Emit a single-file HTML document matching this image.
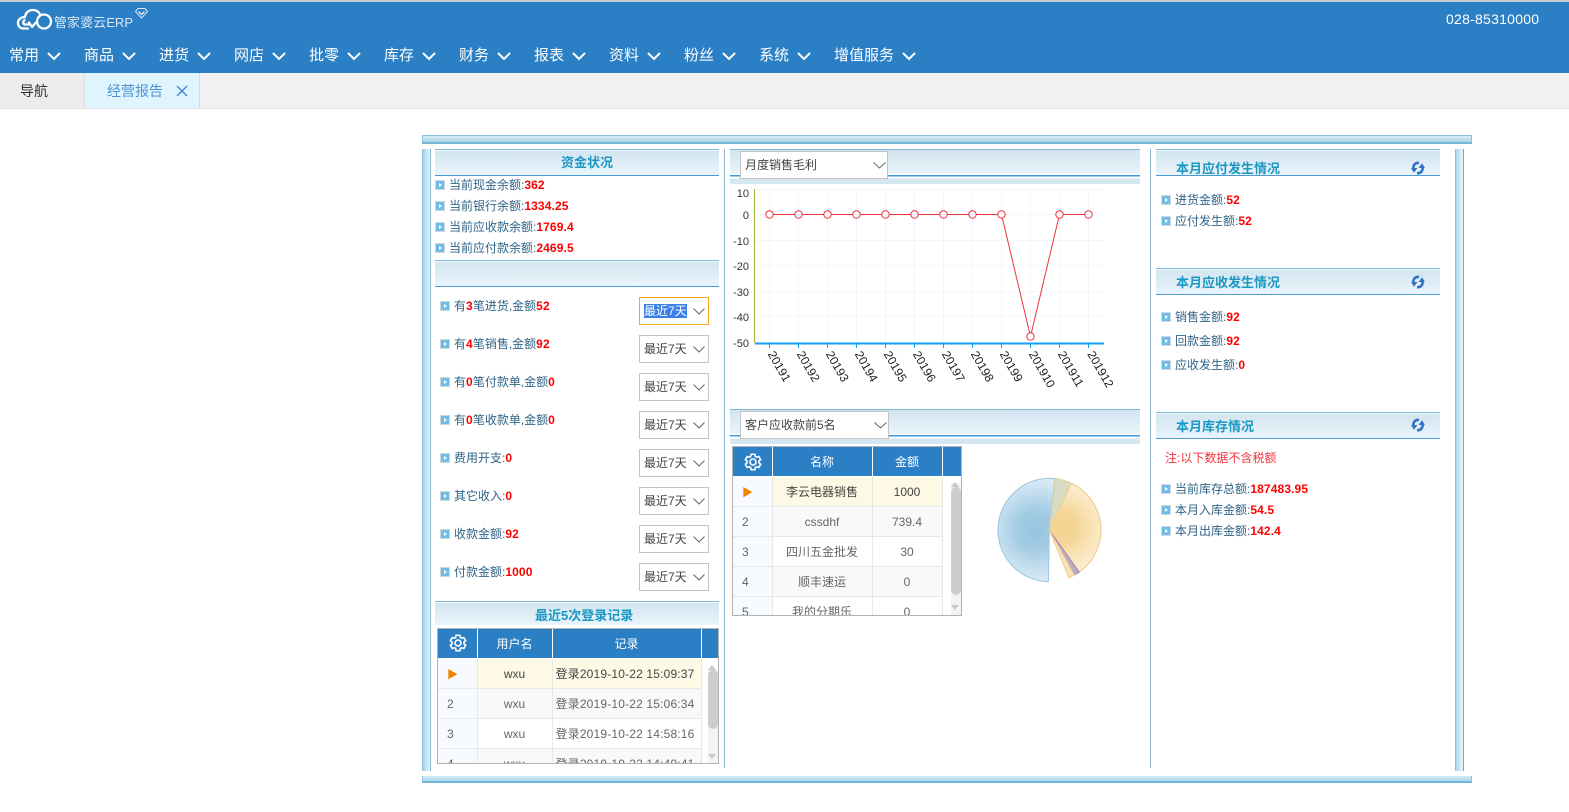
<!DOCTYPE html>
<html lang="zh">
<head>
<meta charset="utf-8">
<title>经营报告</title>
<style>
html,body{margin:0;padding:0;background:#fff;width:1569px;height:812px;overflow:hidden}
body{position:relative;font:12px "Liberation Sans","Noto Sans CJK SC",sans-serif;color:#2f6487}
.a{position:absolute;white-space:nowrap}
svg{position:absolute;overflow:visible}
.nav{top:47px;height:18px;line-height:18px;font-size:15px;color:#fff}
.chev{position:absolute;left:38px;top:1px}
.hd{position:absolute;box-sizing:border-box;border-top:1px solid #7fb9d8;border-bottom:1px solid #4a9ad4;background:linear-gradient(#d2e4ef,#e9f5fb)}
.hd:before{content:"";position:absolute;left:0;right:0;top:0;height:1px;background:#f2f9fc}
.ti{position:absolute;font-size:13px;font-weight:bold;color:#1d97c4;line-height:18px;white-space:nowrap}
.tc{text-align:center}
.r{position:absolute;white-space:nowrap;line-height:16px;height:16px;color:#2f6487}
.r b{color:#f00;font-weight:bold;letter-spacing:.12px}
.r i{position:absolute;left:-14px;top:3px;width:8px;height:8px;background:#6fbce6;border:1px solid #cfd8de}
.r i:after{content:"";position:absolute;left:3px;top:1.5px;border-left:3px solid #fff;border-top:2.5px solid transparent;border-bottom:2.5px solid transparent}
.sel{position:absolute;box-sizing:border-box;background:#fff;border:1px solid #c4c4c4;height:28px;line-height:26px;padding-left:4px;color:#444;font-size:12px;white-space:nowrap}
.sel svg{top:10px}
.w{width:70px}
.w svg{left:53px}
.sel u{text-decoration:none;background:#3b80e6;color:#fff}
.tb{position:absolute;box-sizing:border-box;border:1px solid #b2b2b2;overflow:hidden;background:#fff}
table{border-collapse:collapse;table-layout:fixed;position:absolute;left:0;top:0}
th{background:#2a7fc5;color:#fff;font-weight:normal;height:29px;padding:0;border-right:1px solid #fff;font-size:12px;border-bottom:1px solid #fff}
td{height:29px;padding:0;border-right:1px solid #e8e8e8;border-bottom:1px solid #e8e8e8;text-align:center;color:#666;font-size:12px;white-space:nowrap;overflow:hidden}
td:first-child{background:#f7fbff;text-align:left;padding-left:9px;box-sizing:border-box}
td.l{text-align:left;padding-left:3px;letter-spacing:.17px;box-sizing:border-box}
tr.s td{background:#fef9e5;color:#444}
tr.s td:first-child{background:#f7fbff;color:#f08300;font-size:11px}
tr.e td{background:#f9f9f9}
tr.e td:first-child{background:#f7fbff}
.tr{position:absolute;background:#f3f3f3}
.th{position:absolute;background:#cdcdcd;border-radius:5px}
.ar{position:absolute;width:0;height:0;border-left:4.5px solid transparent;border-right:4.5px solid transparent}
</style>
</head>
<body>
<!-- top bar -->
<div class="a" style="left:0;top:0;width:1569px;height:2px;background:#c8ccd0"></div>
<div class="a" style="left:0;top:1.500px;width:1569px;height:71.500px;background:#2a7fc5"></div>
<svg style="left:0;top:0" width="150" height="36" fill="none" stroke="#fff" stroke-width="2.300" stroke-linecap="round" stroke-linejoin="round">
<path d="M28 28.500H23.500C20 28.500 18 26 18 23C18 19.500 21 17 25 17C25.500 12.500 29 10 33 10C36.500 10 39 12 40.500 15"/>
<path d="M24.500 20C22.500 22 23 25 26 24.500H29"/>
<path d="M29 22.500L32 27L35.500 23"/>
<circle cx="44" cy="21.500" r="7"/>
</svg>
<div class="a" style="left:54px;top:14px;font-size:13px;line-height:18px;color:#d8e8f5;letter-spacing:.05px">管家婆云ERP</div>
<svg style="left:135px;top:8px" width="13" height="11" fill="none" stroke="#d8e8f5" stroke-width="1"><path d="M3 .5H10L12.500 3.500L6.500 10L.5 3.500Z"/><path d="M3.500 3.500L6.500 6.500L9.500 3.500" stroke-width="1.500"/></svg>
<div class="a" style="left:1446px;top:11px;font-size:14px;line-height:16px;letter-spacing:.25px;color:#fff">028-85310000</div>

<div class="a nav" style="left:9px">常用<svg class="chev" width="14" height="16" fill="none" stroke="#fff" stroke-width="2"><path d="M1 5L7 11L13 5"/></svg></div>
<div class="a nav" style="left:84px">商品<svg class="chev" width="14" height="16" fill="none" stroke="#fff" stroke-width="2"><path d="M1 5L7 11L13 5"/></svg></div>
<div class="a nav" style="left:159px">进货<svg class="chev" width="14" height="16" fill="none" stroke="#fff" stroke-width="2"><path d="M1 5L7 11L13 5"/></svg></div>
<div class="a nav" style="left:234px">网店<svg class="chev" width="14" height="16" fill="none" stroke="#fff" stroke-width="2"><path d="M1 5L7 11L13 5"/></svg></div>
<div class="a nav" style="left:309px">批零<svg class="chev" width="14" height="16" fill="none" stroke="#fff" stroke-width="2"><path d="M1 5L7 11L13 5"/></svg></div>
<div class="a nav" style="left:384px">库存<svg class="chev" width="14" height="16" fill="none" stroke="#fff" stroke-width="2"><path d="M1 5L7 11L13 5"/></svg></div>
<div class="a nav" style="left:459px">财务<svg class="chev" width="14" height="16" fill="none" stroke="#fff" stroke-width="2"><path d="M1 5L7 11L13 5"/></svg></div>
<div class="a nav" style="left:534px">报表<svg class="chev" width="14" height="16" fill="none" stroke="#fff" stroke-width="2"><path d="M1 5L7 11L13 5"/></svg></div>
<div class="a nav" style="left:609px">资料<svg class="chev" width="14" height="16" fill="none" stroke="#fff" stroke-width="2"><path d="M1 5L7 11L13 5"/></svg></div>
<div class="a nav" style="left:684px">粉丝<svg class="chev" width="14" height="16" fill="none" stroke="#fff" stroke-width="2"><path d="M1 5L7 11L13 5"/></svg></div>
<div class="a nav" style="left:759px">系统<svg class="chev" width="14" height="16" fill="none" stroke="#fff" stroke-width="2"><path d="M1 5L7 11L13 5"/></svg></div>
<div class="a nav" style="left:834px">增值服务<svg class="chev" style="left:68px" width="14" height="16" fill="none" stroke="#fff" stroke-width="2"><path d="M1 5L7 11L13 5"/></svg></div>

<!-- tabs -->
<div class="a" style="left:0;top:73px;width:1569px;height:35px;background:#f1f1f1"></div>
<div class="a" style="left:0;top:108px;width:1569px;height:1px;background:#e2e4e6"></div>
<div class="a" style="left:0;top:73px;width:84px;height:35px;background:#ececec;border-right:1px solid #dde0e2"></div>
<div class="a" style="left:85px;top:73px;width:114px;height:35px;background:#e0f4fd;border-right:1px solid #c8dde8"></div>
<div class="a" style="left:20px;top:82px;font-size:14px;line-height:18px;color:#333">导航</div>
<div class="a" style="left:107px;top:82px;font-size:14px;line-height:18px;color:#4c93d6">经营报告</div>
<svg style="left:176px;top:85px" width="12" height="12" stroke="#3f87d6" stroke-width="1.400"><path d="M1 1L11 11M11 1L1 11"/></svg>

<!-- frame -->
<div class="a" style="left:422px;top:135px;width:1050px;height:9px;box-sizing:border-box;border:1px solid #86c0dd;border-bottom:2px solid #74b6d8;background:linear-gradient(#d8edf6,#a9d5e9)"></div>
<div class="a" style="left:422px;top:149px;width:9px;height:622px;box-sizing:border-box;border-left:1px solid #86c0dd;border-right:1px solid #8dbdd8;background:linear-gradient(90deg,#a9d5e9,#e4f2f8)"></div>
<div class="a" style="left:1455px;top:149px;width:9px;height:622px;box-sizing:border-box;border-left:1px solid #8dbdd8;border-right:1px solid #6ca6cc;background:linear-gradient(90deg,#a9d5e9,#eef7fb)"></div>
<div class="a" style="left:422px;top:776px;width:1050px;height:7px;box-sizing:border-box;border-left:1px solid #86c0dd;border-right:1px solid #86c0dd;border-bottom:2px solid #74b6d8;background:linear-gradient(#d8edf6,#a9d5e9)"></div>
<div class="a" style="left:724px;top:149px;width:1px;height:619px;background:#8fbad2"></div>
<div class="a" style="left:1150px;top:149px;width:1px;height:619px;background:#8fbad2"></div>

<!-- left column -->
<div class="hd" style="left:435px;top:149px;width:284px;height:27px"></div>
<div class="ti" style="left:561px;top:154px">资金状况</div>
<div class="r" style="left:449px;top:177px"><i></i>当前现金余额:<b>362</b></div>
<div class="r" style="left:449px;top:198px"><i></i>当前银行余额:<b>1334.25</b></div>
<div class="r" style="left:449px;top:219px"><i></i>当前应收款余额:<b>1769.4</b></div>
<div class="r" style="left:449px;top:240px"><i></i>当前应付款余额:<b>2469.5</b></div>
<div class="hd" style="left:435px;top:260px;width:284px;height:27px"></div>

<div class="r" style="left:454px;top:298px"><i></i>有<b>3</b>笔进货,金额<b>52</b></div>
<div class="r" style="left:454px;top:336px"><i></i>有<b>4</b>笔销售,金额<b>92</b></div>
<div class="r" style="left:454px;top:374px"><i></i>有<b>0</b>笔付款单,金额<b>0</b></div>
<div class="r" style="left:454px;top:412px"><i></i>有<b>0</b>笔收款单,金额<b>0</b></div>
<div class="r" style="left:454px;top:450px"><i></i>费用开支:<b>0</b></div>
<div class="r" style="left:454px;top:488px"><i></i>其它收入:<b>0</b></div>
<div class="r" style="left:454px;top:526px"><i></i>收款金额:<b>92</b></div>
<div class="r" style="left:454px;top:564px"><i></i>付款金额:<b>1000</b></div>

<div class="sel w" style="left:639px;top:297px;border-color:#f5a623"><u>最近7天</u><svg width="12" height="7" fill="none" stroke="#666"><path d="M.5 .5L6 6L11.500 .5"/></svg></div>
<div class="sel w" style="left:639px;top:335px">最近7天<svg width="12" height="7" fill="none" stroke="#666"><path d="M.5 .5L6 6L11.500 .5"/></svg></div>
<div class="sel w" style="left:639px;top:373px">最近7天<svg width="12" height="7" fill="none" stroke="#666"><path d="M.5 .5L6 6L11.500 .5"/></svg></div>
<div class="sel w" style="left:639px;top:411px">最近7天<svg width="12" height="7" fill="none" stroke="#666"><path d="M.5 .5L6 6L11.500 .5"/></svg></div>
<div class="sel w" style="left:639px;top:449px">最近7天<svg width="12" height="7" fill="none" stroke="#666"><path d="M.5 .5L6 6L11.500 .5"/></svg></div>
<div class="sel w" style="left:639px;top:487px">最近7天<svg width="12" height="7" fill="none" stroke="#666"><path d="M.5 .5L6 6L11.500 .5"/></svg></div>
<div class="sel w" style="left:639px;top:525px">最近7天<svg width="12" height="7" fill="none" stroke="#666"><path d="M.5 .5L6 6L11.500 .5"/></svg></div>
<div class="sel w" style="left:639px;top:563px">最近7天<svg width="12" height="7" fill="none" stroke="#666"><path d="M.5 .5L6 6L11.500 .5"/></svg></div>

<div class="hd" style="left:435px;top:601px;width:284px;height:24px;border-bottom:0"></div>
<div class="ti" style="left:535px;top:607px">最近5次登录记录</div>

<div class="tb" style="left:437px;top:628px;width:282px;height:136px">
<table style="width:280px">
<colgroup><col style="width:39px"><col style="width:75px"><col style="width:149px"><col style="width:17px"></colgroup>
<tr><th>&nbsp;</th><th>用户名</th><th>记录</th><th>&nbsp;</th></tr>
<tr class="s"><td>&#9654;</td><td>wxu</td><td class="l">登录2019-10-22 15:09:37</td><td style="border:0;background:#fff"></td></tr>
<tr class="e"><td>2</td><td>wxu</td><td class="l">登录2019-10-22 15:06:34</td><td style="border:0;background:#fff"></td></tr>
<tr><td>3</td><td>wxu</td><td class="l">登录2019-10-22 14:58:16</td><td style="border:0;background:#fff"></td></tr>
<tr class="e"><td>4</td><td>wxu</td><td class="l">登录2019-10-22 14:49:41</td><td style="border:0;background:#fff"></td></tr>
</table>
<div class="tr" style="left:270px;top:41px;width:10px;height:93px"></div>
<div class="th" style="left:270px;top:41px;width:10px;height:59px"></div>
<div class="ar" style="left:270px;top:36px;border-bottom:5px solid #c8c8c8"></div>
<div class="ar" style="left:270px;top:125px;border-top:5px solid #c8c8c8"></div>
<svg style="left:20px;top:14px" width="1" height="1" fill="none" stroke="#fff" stroke-width="1.600" stroke-linejoin="round"><polygon points="-1.940,-7.760 1.940,-7.760 2.250,-5.560 3.690,-4.730 5.750,-5.560 7.690,-2.200 5.940,-.84 5.940,.84 7.690,2.200 5.750,5.560 3.690,4.730 2.250,5.560 1.940,7.760 -1.940,7.760 -2.250,5.560 -3.690,4.730 -5.750,5.560 -7.690,2.200 -5.940,.84 -5.940,-.84 -7.690,-2.200 -5.750,-5.560 -3.690,-4.730 -2.250,-5.560"/><circle r="3"/></svg>
</div>

<!-- middle column -->
<div class="a" style="left:730px;top:149px;width:410px;height:35px;box-sizing:border-box;border-top:1px solid #7fb9d8;background:linear-gradient(#d2e4ef,#e9f5fb 70%,#fff 70%,#fff 74%,#3d9ade 74%,#3d9ade 78%,#fff 78%,#fff 84%,#d4e6f0 84%)"></div>
<div class="sel" style="left:740px;top:151px;width:148px;height:28px">月度销售毛利<svg style="left:132px" width="13" height="7" fill="none" stroke="#666"><path d="M.5 .5L6.500 6L12.500 .5"/></svg></div>

<svg style="left:0;top:0" width="1569" height="812" font-family="'Liberation Sans',sans-serif" font-size="11">
<g stroke="#f4f4fc" stroke-width="1" fill="none">
<path d="M755 189.500H1104M755 214.500H1104M755 240.500H1104M755 265.500H1104M755 291.500H1104M755 316.500H1104"/>
<path d="M769.500 189V343M798.500 189V343M827.500 189V343M856.500 189V343M885.500 189V343M914.500 189V343M943.500 189V343M972.500 189V343M1001.500 189V343M1030.500 189V343M1059.500 189V343M1088.500 189V343"/>
</g>
<path d="M754.500 189V343" stroke="#a5bd3e" stroke-width="1.200" fill="none"/>
<path d="M755 343.500H1104" stroke="#12a2f5" stroke-width="2" fill="none"/>
<path d="M769.500 343V348M798.500 343V348M827.500 343V348M856.500 343V348M885.500 343V348M914.500 343V348M943.500 343V348M972.500 343V348M1001.500 343V348M1030.500 343V348M1059.500 343V348M1088.500 343V348" stroke="#12a2f5" fill="none"/>
<g fill="#333" text-anchor="end">
<text x="749" y="197">10</text>
<text x="749" y="219">0</text>
<text x="749" y="245">-10</text>
<text x="749" y="270">-20</text>
<text x="749" y="296">-30</text>
<text x="749" y="321">-40</text>
<text x="749" y="347">-50</text>
</g>
<path d="M769.500 214.500H1001.500L1030.500 336.500L1059.500 214.500H1088.500" fill="none" stroke="#f0313d" stroke-width="1"/>
<g fill="#fff" stroke="#f0313d" stroke-width="1">
<circle cx="769.500" cy="214.500" r="3.700"/><circle cx="798.500" cy="214.500" r="3.700"/><circle cx="827.500" cy="214.500" r="3.700"/><circle cx="856.500" cy="214.500" r="3.700"/><circle cx="885.500" cy="214.500" r="3.700"/><circle cx="914.500" cy="214.500" r="3.700"/><circle cx="943.500" cy="214.500" r="3.700"/><circle cx="972.500" cy="214.500" r="3.700"/><circle cx="1001.500" cy="214.500" r="3.700"/><circle cx="1030.500" cy="336.500" r="3.700"/><circle cx="1059.500" cy="214.500" r="3.700"/><circle cx="1088.500" cy="214.500" r="3.700"/>
</g>
<g fill="#222" font-size="12">
<text transform="translate(767.500 354) rotate(60)">20191</text>
<text transform="translate(796.500 354) rotate(60)">20192</text>
<text transform="translate(825.500 354) rotate(60)">20193</text>
<text transform="translate(854.500 354) rotate(60)">20194</text>
<text transform="translate(883.500 354) rotate(60)">20195</text>
<text transform="translate(912.500 354) rotate(60)">20196</text>
<text transform="translate(941.500 354) rotate(60)">20197</text>
<text transform="translate(970.500 354) rotate(60)">20198</text>
<text transform="translate(999.500 354) rotate(60)">20199</text>
<text transform="translate(1028.500 354) rotate(60)">201910</text>
<text transform="translate(1057.500 354) rotate(60)">201911</text>
<text transform="translate(1087 354) rotate(60)">201912</text>
</g>
<defs>
<radialGradient id="gb" gradientUnits="userSpaceOnUse" cx="1037" cy="530" r="50"><stop offset="0" stop-color="#97c4df"/><stop offset=".4" stop-color="#a3cce4"/><stop offset="1" stop-color="#d9eaf5"/></radialGradient>
<radialGradient id="go" gradientUnits="userSpaceOnUse" cx="1063" cy="528" r="42"><stop offset="0" stop-color="#f4d18d"/><stop offset=".4" stop-color="#f6d89c"/><stop offset="1" stop-color="#fcedcf"/></radialGradient>
</defs>
<path d="M1049.300 530L1048.300 581.700A51.700 51.700 0 1 1 1055.100 478.600Z" fill="url(#gb)" stroke="#a3cae3" stroke-width="1.200"/>
<path d="M1049.300 530L1055.100 478.600A51.700 51.700 0 0 1 1071.300 483.300Z" fill="#d8dcc2" stroke="#d5cd9c"/>
<path d="M1049.300 530L1071.300 483.300A51.700 51.700 0 0 1 1079.200 572.200Z" fill="url(#go)" stroke="#f0cf8f" stroke-width="1.200"/>
<path d="M1049.300 530L1079.200 572.200L1074.300 575Z" fill="#bbaec7" stroke="#9a86b4"/>
<path d="M1049.300 530L1074.300 575L1069 578Z" fill="#f8e3ba" stroke="#f0cf8f"/>
</svg>

<div class="a" style="left:730px;top:409px;width:410px;height:35px;box-sizing:border-box;border-top:1px solid #7fb9d8;background:linear-gradient(#d2e4ef,#e9f5fb 70%,#fff 70%,#fff 74%,#3d9ade 74%,#3d9ade 78%,#fff 78%,#fff 84%,#d4e6f0 84%)"></div>
<div class="sel" style="left:740px;top:411px;width:149px;height:28px">客户应收款前5名<svg style="left:133px" width="13" height="7" fill="none" stroke="#666"><path d="M.5 .5L6.500 6L12.500 .5"/></svg></div>

<div class="tb" style="left:732px;top:446px;width:230px;height:170px">
<table style="width:228px">
<colgroup><col style="width:39px"><col style="width:100px"><col style="width:70px"><col style="width:19px"></colgroup>
<tr><th>&nbsp;</th><th>名称</th><th>金额</th><th>&nbsp;</th></tr>
<tr class="s"><td>&#9654;</td><td>李云电器销售</td><td>1000</td><td style="border:0;background:#fff"></td></tr>
<tr class="e"><td>2</td><td>cssdhf</td><td>739.4</td><td style="border:0;background:#fff"></td></tr>
<tr><td>3</td><td>四川五金批发</td><td>30</td><td style="border:0;background:#fff"></td></tr>
<tr class="e"><td>4</td><td>顺丰速运</td><td>0</td><td style="border:0;background:#fff"></td></tr>
<tr><td>5</td><td>我的分期乐</td><td>0</td><td style="border:0;background:#fff"></td></tr>
</table>
<div class="tr" style="left:218px;top:36px;width:10px;height:132px"></div>
<div class="th" style="left:218px;top:40px;width:10px;height:108px"></div>
<div class="ar" style="left:218px;top:35px;border-bottom:5px solid #c8c8c8"></div>
<div class="ar" style="left:218px;top:158px;border-top:5px solid #c8c8c8"></div>
<svg style="left:20px;top:15px" width="1" height="1" fill="none" stroke="#fff" stroke-width="1.600" stroke-linejoin="round"><polygon points="-1.940,-7.760 1.940,-7.760 2.250,-5.560 3.690,-4.730 5.750,-5.560 7.690,-2.200 5.940,-.84 5.940,.84 7.690,2.200 5.750,5.560 3.690,4.730 2.250,5.560 1.940,7.760 -1.940,7.760 -2.250,5.560 -3.690,4.730 -5.750,5.560 -7.690,2.200 -5.940,.84 -5.940,-.84 -7.690,-2.200 -5.750,-5.560 -3.690,-4.730 -2.250,-5.560"/><circle r="3"/></svg>
</div>

<!-- right column -->
<div class="hd" style="left:1156px;top:149px;width:284px;height:27px"></div>
<div class="ti" style="left:1176px;top:160px">本月应付发生情况</div>
<svg style="left:1411px;top:161px" width="14" height="14" fill="none" stroke="#3572c6" stroke-width="2.600"><path d="M8 1.800C3.800 1.500 1.800 4.500 2.500 8.500"/><path d="M.5 7L3 11L6 7" fill="#3572c6" stroke-width=".8"/><path d="M6 12.200C10.200 12.500 12.200 9.500 11.500 5.500"/><path d="M8 7L11 3L13.500 7" fill="#3572c6" stroke-width=".8"/></svg>
<div class="r" style="left:1175px;top:192px"><i></i>进货金额:<b>52</b></div>
<div class="r" style="left:1175px;top:213px"><i></i>应付发生额:<b>52</b></div>

<div class="hd" style="left:1156px;top:268px;width:284px;height:27px"></div>
<div class="ti" style="left:1176px;top:274px">本月应收发生情况</div>
<svg style="left:1411px;top:275px" width="14" height="14" fill="none" stroke="#3572c6" stroke-width="2.600"><path d="M8 1.800C3.800 1.500 1.800 4.500 2.500 8.500"/><path d="M.5 7L3 11L6 7" fill="#3572c6" stroke-width=".8"/><path d="M6 12.200C10.200 12.500 12.200 9.500 11.500 5.500"/><path d="M8 7L11 3L13.500 7" fill="#3572c6" stroke-width=".8"/></svg>
<div class="r" style="left:1175px;top:309px"><i></i>销售金额:<b>92</b></div>
<div class="r" style="left:1175px;top:333px"><i></i>回款金额:<b>92</b></div>
<div class="r" style="left:1175px;top:357px"><i></i>应收发生额:<b>0</b></div>

<div class="hd" style="left:1156px;top:412px;width:284px;height:27px"></div>
<div class="ti" style="left:1176px;top:418px">本月库存情况</div>
<svg style="left:1411px;top:418px" width="14" height="14" fill="none" stroke="#3572c6" stroke-width="2.600"><path d="M8 1.800C3.800 1.500 1.800 4.500 2.500 8.500"/><path d="M.5 7L3 11L6 7" fill="#3572c6" stroke-width=".8"/><path d="M6 12.200C10.200 12.500 12.200 9.500 11.500 5.500"/><path d="M8 7L11 3L13.500 7" fill="#3572c6" stroke-width=".8"/></svg>
<div class="a" style="left:1165px;top:450px;line-height:16px;color:#f5333f">注:以下数据不含税额</div>
<div class="r" style="left:1175px;top:481px"><i></i>当前库存总额:<b>187483.95</b></div>
<div class="r" style="left:1175px;top:502px"><i></i>本月入库金额:<b>54.5</b></div>
<div class="r" style="left:1175px;top:523px"><i></i>本月出库金额:<b>142.4</b></div>
</body>
</html>
